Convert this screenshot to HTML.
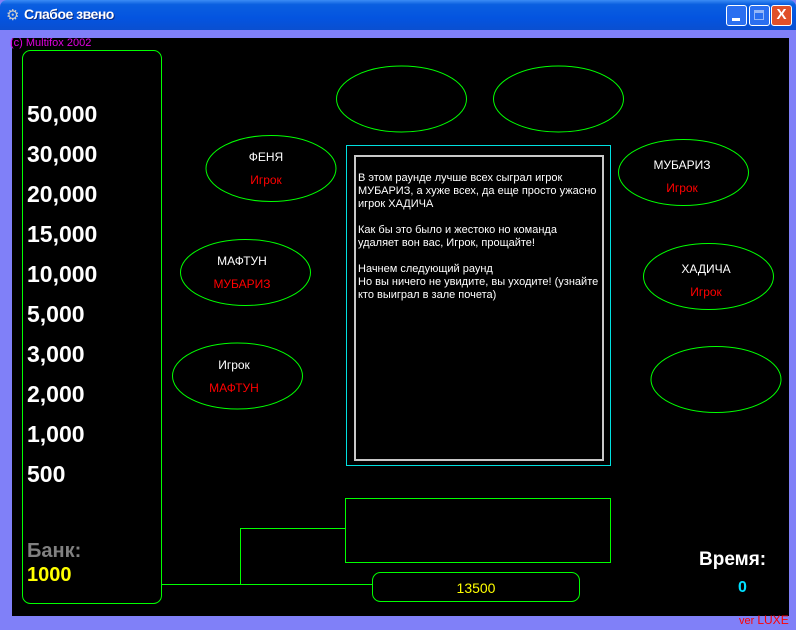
<!DOCTYPE html>
<html><head><meta charset="utf-8"><style>
*{margin:0;padding:0}
body{width:796px;height:630px;overflow:hidden;background:#8080f8;position:relative;font-family:"Liberation Sans","DejaVu Sans",sans-serif}
.t{position:absolute;white-space:nowrap}
#title{position:absolute;left:0;top:0;width:796px;height:30px;background:linear-gradient(#3b8cf5 0,#0a5fe0 15%,#0454e0 60%,#0a4fd0 100%);border-radius:7px 7px 0 0}
#black{position:absolute;left:12px;top:38px;width:777px;height:578px;background:#000}
.n{position:absolute;left:27px;color:#fff;font-weight:bold;font-size:23px}
.e{position:absolute;font-size:12px;text-align:center;width:130px}
.btn{position:absolute;top:5px;width:21px;height:21px;border:1px solid #fff;border-radius:3px;box-sizing:border-box}
</style></head><body>
<div id="title">
<div class="t" style="left:6px;top:6px;font-size:15px;color:#ccc">⚙</div>
<div class="t" style="left:24px;top:6px;color:#fff;font-weight:bold;font-size:14px;letter-spacing:-0.5px;text-shadow:1px 1px #0a2a80">Слабое звено</div>
<div class="btn" style="left:726px;background:#2b6ff0"><div style="position:absolute;left:5px;top:12px;width:8px;height:3px;background:#fff"></div></div>
<div class="btn" style="left:749px;background:#2b6ff0"><div style="position:absolute;left:4px;top:4px;width:10px;height:10px;border:1px solid #fff;border-top-width:3px;box-sizing:border-box;opacity:.5"></div></div>
<div class="btn" style="left:771px;background:#e0502a;color:#fff;font-weight:bold;font-size:15px;text-align:center;line-height:18px">X</div>
</div>
<div id="black"></div>
<div class="t" style="left:10px;top:37px;font-size:11px;color:#e000e0">(c) Multifox 2002</div>
<svg style="position:absolute;left:0;top:0" width="796" height="630">
<g fill="none" stroke="#00ff00" stroke-width="1">
<rect x="22.5" y="50.5" width="139" height="553" rx="8"/>
<polyline points="161.5,584.5 372.5,584.5"/>
<polyline points="240.5,584.5 240.5,528.5 345.5,528.5"/>
<rect x="345.5" y="498.5" width="265" height="64"/>
<rect x="372.5" y="572.5" width="207" height="29" rx="8"/>
<ellipse cx="401.5" cy="99" rx="65" ry="33"/>
<ellipse cx="558.5" cy="99" rx="65" ry="33"/>
<ellipse cx="271" cy="168.5" rx="65" ry="33"/>
<ellipse cx="245.5" cy="272.5" rx="65" ry="33"/>
<ellipse cx="237.5" cy="376" rx="65" ry="33"/>
<ellipse cx="683.5" cy="172.5" rx="65" ry="33"/>
<ellipse cx="708.5" cy="276.5" rx="65" ry="33"/>
<ellipse cx="716" cy="379.5" rx="65" ry="33"/>
</g>
<rect x="346.5" y="145.5" width="264" height="320" fill="none" stroke="#00e0e0"/>
<rect x="355" y="156" width="248" height="304" fill="none" stroke="#c8c8c8" stroke-width="2"/>
</svg>
<div class="n" style="top:101px">50,000</div>
<div class="n" style="top:141px">30,000</div>
<div class="n" style="top:181px">20,000</div>
<div class="n" style="top:221px">15,000</div>
<div class="n" style="top:261px">10,000</div>
<div class="n" style="top:301px">5,000</div>
<div class="n" style="top:341px">3,000</div>
<div class="n" style="top:381px">2,000</div>
<div class="n" style="top:421px">1,000</div>
<div class="n" style="top:461px">500</div>
<div class="n" style="top:540px;color:#808080;font-size:20px">Банк:</div>
<div class="n" style="top:564px;color:#ffff00;font-size:20px">1000</div>
<div class="e" style="left:201px;top:150px;color:#fff">ФЕНЯ</div>
<div class="e" style="left:201px;top:173px;color:#f00">Игрок</div>
<div class="e" style="left:177px;top:254px;color:#fff">МАФТУН</div>
<div class="e" style="left:177px;top:277px;color:#f00">МУБАРИЗ</div>
<div class="e" style="left:169px;top:358px;color:#fff">Игрок</div>
<div class="e" style="left:169px;top:381px;color:#f00">МАФТУН</div>
<div class="e" style="left:617px;top:158px;color:#fff">МУБАРИЗ</div>
<div class="e" style="left:617px;top:181px;color:#f00">Игрок</div>
<div class="e" style="left:641px;top:262px;color:#fff">ХАДИЧА</div>
<div class="e" style="left:641px;top:285px;color:#f00">Игрок</div>
<div class="t" style="left:358px;top:172px;color:#fff;font-size:11px;line-height:13px">В этом раунде лучше всех сыграл игрок<br>МУБАРИЗ, а хуже всех, да еще просто ужасно<br>игрок ХАДИЧА<br><br>Как бы это было и жестоко но команда<br>удаляет вон вас, Игрок, прощайте!<br><br>Начнем следующий раунд<br>Но вы ничего не увидите, вы уходите! (узнайте<br>кто выиграл в зале почета)</div>
<div class="t" style="left:372px;top:580px;width:208px;text-align:center;color:#ffff00;font-size:14px">13500</div>
<div class="t" style="left:699px;top:549px;color:#fff;font-weight:bold;font-size:19px">Время:</div>
<div class="t" style="left:738px;top:579px;color:#00e0ff;font-weight:bold;font-size:16px">0</div>
<div class="t" style="left:739px;top:613px;color:#f00;font-size:11px">ver <span style="font-size:12px">LUXE</span></div>
</body></html>
